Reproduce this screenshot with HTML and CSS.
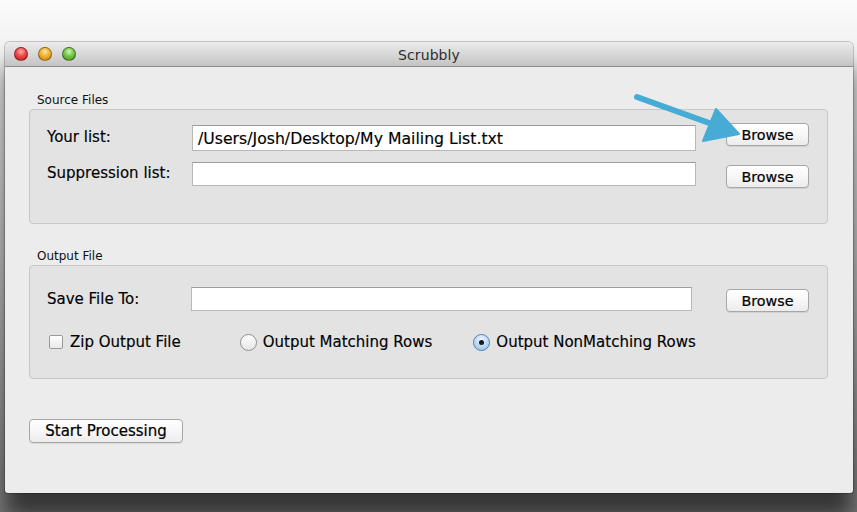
FILE: index.html
```
<!DOCTYPE html>
<html>
<head>
<meta charset="utf-8">
<link rel="stylesheet" href="styles.css">
</head>
<body>
<div class="stage">
  <div class="window">
    <div class="titlebar">
      <div class="lights">
        <span class="light red"></span>
        <span class="light yellow"></span>
        <span class="light green"></span>
      </div>
      <div class="title">Scrubbly</div>
    </div>
    <div class="content">
      <div class="group-label">Source Files</div>
      <div class="panel panel-source">
        <div class="row row-first">
          <div class="label">Your list:</div>
          <div class="field field-tall">/Users/Josh/Desktop/My Mailing List.txt</div>
          <button class="btn btn-browse">Browse</button>
        </div>
        <div class="row row-second">
          <div class="label">Suppression list:</div>
          <div class="field"></div>
          <button class="btn btn-browse btn-low">Browse</button>
        </div>
      </div>

      <div class="group-label group-label-2">Output File</div>
      <div class="panel panel-output">
        <div class="row row-save">
          <div class="label label-save">Save File To:</div>
          <div class="field field-save"></div>
          <button class="btn btn-browse btn-low">Browse</button>
        </div>
        <div class="options">
          <div class="opt opt-zip"><span class="checkbox"></span>Zip Output File</div>
          <div class="opt opt-match"><span class="radio"></span>Output Matching Rows</div>
          <div class="opt opt-nonmatch"><span class="radio radio-on"><span class="dot"></span></span>Output NonMatching Rows</div>
        </div>
      </div>

      <button class="btn btn-start">Start Processing</button>
    </div>
  </div>
  <svg class="arrow" width="857" height="512" viewBox="0 0 857 512">
    <line x1="637" y1="97" x2="712" y2="124" stroke="#46acd6" stroke-width="6" stroke-linecap="round"/>
    <polygon points="716,109 739,134 703,141" fill="#46acd6" stroke="#46acd6" stroke-width="2" stroke-linejoin="round"/>
  </svg>
</div>
</body>
</html>
```

FILE: styles.css
```
* { box-sizing: border-box; }
html, body {
  margin: 0;
  padding: 0;
}
body {
  width: 857px;
  height: 512px;
  overflow: hidden;
  background: linear-gradient(to bottom, #fbfbfb 0px, #f3f3f3 40px, #c4c4c4 250px, #909090 440px, #7c7c7c 512px);
  font-family: "DejaVu Sans", "Liberation Sans", sans-serif;
  color: #000;
}
.stage {
  position: relative;
  width: 857px;
  height: 512px;
  padding: 42px 4px 0 5px;
}
.window {
  width: 848px;
  height: 451px;
  background: #ececec;
  border-radius: 5px 5px 3px 3px;
  box-shadow: 0 0 0 1px rgba(0,0,0,0.2), 0 24px 22px rgba(0,0,0,0.6);
  display: flex;
  flex-direction: column;
  overflow: hidden;
}
.titlebar {
  height: 25px;
  flex: none;
  display: flex;
  align-items: center;
  position: relative;
  background: linear-gradient(to bottom, #ececec 0%, #dcdcdc 40%, #c4c4c4 100%);
  border-bottom: 1px solid #8b8b8b;
}
.lights {
  display: flex;
  gap: 10px;
  padding-left: 9px;
}
.light {
  width: 14px;
  height: 14px;
  border-radius: 50%;
  display: block;
  border: 1px solid rgba(0,0,0,0.35);
}
.red { background: radial-gradient(circle at 50% 30%, #ffb0b0 0%, #f04848 45%, #b81818 100%); }
.yellow { background: radial-gradient(circle at 50% 30%, #ffe6a0 0%, #f2b230 45%, #bf7a08 100%); }
.green { background: radial-gradient(circle at 50% 30%, #d4f7a8 0%, #76c44c 45%, #3f8a20 100%); }
.title {
  position: absolute;
  left: 0;
  right: 0;
  text-align: center;
  font-size: 14px;
  color: #2e2e2e;
  top: 5px;
  letter-spacing: 0.1px;
}
.content {
  flex: 1;
  padding: 26px 24px 0 24px;
  display: flex;
  flex-direction: column;
  align-items: flex-start;
}
.group-label {
  font-size: 12px;
  color: #111;
  margin-left: 8px;
  height: 15px;
  line-height: 15px;
}
.group-label-2 { margin-top: 25px; }
.panel {
  width: 799px;
  background: #e3e3e3;
  border: 1px solid #c8c8c8;
  border-radius: 4px;
  margin-top: 1px;
  padding: 0 18px 0 17px;
}
.panel-source { height: 115px; padding-top: 14px; }
.panel-output { height: 114px; padding-top: 21px; }
.row {
  display: flex;
  align-items: flex-start;
}
.row-second { margin-top: 11px; }
.label {
  width: 145px;
  font-size: 15px;
  line-height: 26px;
  color: #000;
  flex: none;
  -webkit-text-stroke: 0.15px #000;
}
.row-second .label { line-height: 22px; }
.field {
  width: 504px;
  height: 24px;
  background: #fff;
  border: 1px solid #b8b8b8;
  border-top-color: #9c9c9c;
  font-size: 15.7px;
  line-height: 22px;
  padding-left: 5px;
  color: #000;
  flex: none;
  -webkit-text-stroke: 0.15px #000;
}
.field-tall { height: 26px; margin-top: 1px; line-height: 25px; }
.label-save { width: 144px; line-height: 24px; }
.field-save { width: 501px; }
.btn {
  font-family: "DejaVu Sans", "Liberation Sans", sans-serif;
  font-size: 14.3px;
  color: #000;
  background: linear-gradient(to bottom, #ffffff 0%, #f7f7f7 50%, #ececec 100%);
  border: 1px solid #a6a6a6;
  border-radius: 4px;
  box-shadow: 0 1px 0 rgba(0,0,0,0.08);
  height: 23px;
  padding: 0;
  flex: none;
  -webkit-text-stroke: 0.2px #000;
}
.btn-browse {
  width: 83px;
  margin-left: 30px;
}
.row-first .btn-browse { margin-top: -1px; }
.btn-low { margin-top: 3px; }
.row-save .btn-low { margin-top: 2px; margin-left: 34px; }
.options {
  display: flex;
  align-items: center;
  margin-top: 17px;
  height: 26px;
  font-size: 15px;
  color: #000;
  -webkit-text-stroke: 0.15px #000;
}
.opt {
  display: flex;
  align-items: center;
  white-space: nowrap;
}
.checkbox {
  width: 14px;
  height: 14px;
  border: 1px solid #9a9a9a;
  border-radius: 2px;
  background: linear-gradient(to bottom, #ffffff, #e9e9e9);
  margin-left: 2px;
  margin-right: 7px;
  display: block;
}
.opt-match { margin-left: 59px; }
.opt-nonmatch { margin-left: 41px; }
.radio {
  width: 17px;
  height: 17px;
  border-radius: 50%;
  border: 1px solid #8f8f8f;
  background: linear-gradient(to bottom, #ffffff, #e6e6e6);
  margin-right: 6px;
  display: flex;
  align-items: center;
  justify-content: center;
}
.radio-on {
  border-color: #5a7fa8;
  background: radial-gradient(circle at 50% 30%, #eaf4ff 0%, #b9d8f5 55%, #8db9e6 100%);
}
.dot {
  width: 5px;
  height: 5px;
  border-radius: 50%;
  background: #1a1a1a;
  display: block;
}
.btn-start {
  margin-top: 40px;
  width: 154px;
  height: 24px;
  font-size: 15px;
}
.arrow {
  position: absolute;
  left: 0;
  top: 0;
  pointer-events: none;
}
```
